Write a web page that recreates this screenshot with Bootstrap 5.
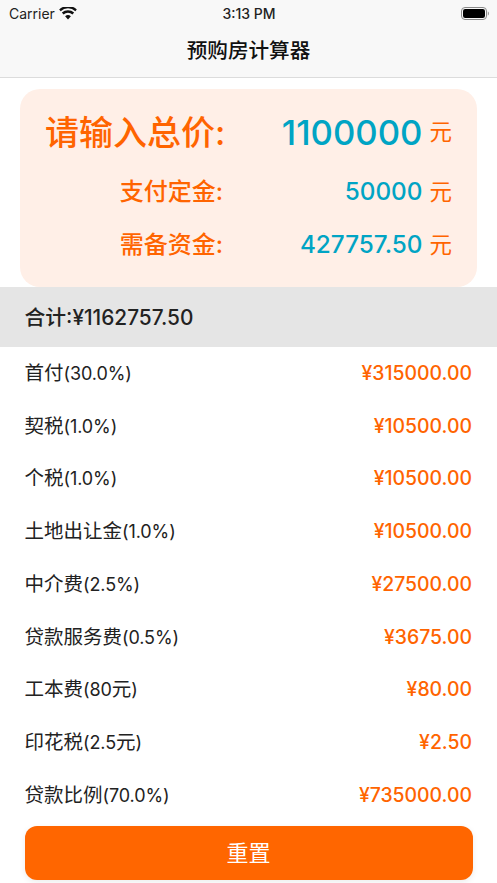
<!doctype html>
<html lang="zh">
<head>
<meta charset="utf-8">
<title>预购房计算器</title>
<link href="https://cdn.jsdelivr.net/npm/bootstrap@5.3.0/dist/css/bootstrap.min.css" rel="stylesheet">
<style>
html,body{margin:0;height:883px;overflow:hidden}
body{font-family:Inter,"Noto Sans CJK SC",sans-serif;background:#fff;color:#222}
.topbar{height:78px;background:#f8f8f8;border-bottom:1px solid #dcdcdc}
.statusrow{height:26px;padding:0 8px 0 9px;font-size:14px;color:#222}
.statusrow>div{flex:1 1 0}
.clock{font-weight:500;font-size:14px;text-align:center}
.navtitle{height:50px;font-size:20.6px;font-weight:500;color:#111}
.calcbox{margin:11px 20px 0;height:198px;background:#ffefe7;border-radius:20px;padding:10px 25px 0}
.calcrow{height:53px}
.bigrow{height:66px}
.lbl{color:#ff6400;font-size:24px;font-weight:500;text-align:right;width:178px;flex:none;white-space:nowrap}
.biglbl{font-size:34px;width:176px;margin-right:2px}
.val{color:#00a4c4;font-size:24.3px;font-weight:500;margin-left:auto}
.bigval{font-size:34.7px}
.unit{color:#ff6400;font-size:22.5px;margin-left:7px}
.totalbar{height:60px;background:#e5e5e5;padding:2px 25px 0 24.5px;font-size:20.8px;font-weight:500}
.itemrow{height:52.75px;padding:0 25px 0 24.5px;font-size:18px;letter-spacing:-.1px}
.hanzi{font-size:19.5px;letter-spacing:0}
.money{color:#ff6400;font-weight:500;font-size:19.4px;letter-spacing:0}
.resetbtn{display:block;margin:4px 25px 0 24.5px;width:448px;height:54px;background:#ff6600;border:0;border-radius:12px;color:#fff;font-size:22px;padding-top:8px;box-shadow:0 2px 6px rgba(0,0,0,.08)}
.resetbtn:hover{background:#ff6600;color:#fff}
</style>
</head>
<body>
<div class="topbar">
  <div class="statusrow d-flex align-items-center">
    <div class="d-flex align-items-center gap-1"><span>Carrier</span>
      <svg width="18" height="13" viewBox="0 0 19 14"><path d="M9.500 13.500 6.400 9.900a4.600 4.600 0 0 1 6.200 0ZM4.700 8 2.900 6a9.800 9.800 0 0 1 13.200 0l-1.800 2a7.200 7.200 0 0 0-9.600 0ZM1.600 4.500 0 2.600a14 14 0 0 1 19 0l-1.600 1.900a11.600 11.600 0 0 0-15.800 0Z" fill="#111"/></svg>
    </div>
    <div class="clock">3:13 PM</div>
    <div class="d-flex justify-content-end">
      <svg width="28" height="13" viewBox="0 0 28 13"><rect x=".5" y=".5" width="25" height="12" rx="3.500" fill="none" stroke="#888"/><rect x="2" y="2" width="22" height="9" rx="2.200" fill="#000"/><path d="M26.800 4.500c.8.300 1.200 1.100 1.200 2s-.4 1.700-1.200 2Z" fill="#999"/></svg>
    </div>
  </div>
  <div class="navtitle d-flex align-items-center justify-content-center">预购房计算器</div>
</div>
<div class="calcbox">
  <div class="calcrow bigrow d-flex align-items-center"><div class="lbl biglbl">请输入总价:</div><div class="val bigval">1100000</div><div class="unit">元</div></div>
  <div class="calcrow d-flex align-items-center"><div class="lbl">支付定金:</div><div class="val">50000</div><div class="unit">元</div></div>
  <div class="calcrow d-flex align-items-center"><div class="lbl">需备资金:</div><div class="val">427757.50</div><div class="unit">元</div></div>
</div>
<div class="totalbar d-flex align-items-center">合计:¥1162757.50</div>
<div>
  <div class="itemrow d-flex align-items-center justify-content-between"><span><span class="hanzi">首付</span>(30.0%)</span><span class="money">¥315000.00</span></div>
  <div class="itemrow d-flex align-items-center justify-content-between"><span><span class="hanzi">契税</span>(1.0%)</span><span class="money">¥10500.00</span></div>
  <div class="itemrow d-flex align-items-center justify-content-between"><span><span class="hanzi">个税</span>(1.0%)</span><span class="money">¥10500.00</span></div>
  <div class="itemrow d-flex align-items-center justify-content-between"><span><span class="hanzi">土地出让金</span>(1.0%)</span><span class="money">¥10500.00</span></div>
  <div class="itemrow d-flex align-items-center justify-content-between"><span><span class="hanzi">中介费</span>(2.5%)</span><span class="money">¥27500.00</span></div>
  <div class="itemrow d-flex align-items-center justify-content-between"><span><span class="hanzi">贷款服务费</span>(0.5%)</span><span class="money">¥3675.00</span></div>
  <div class="itemrow d-flex align-items-center justify-content-between"><span><span class="hanzi">工本费</span>(80<span class="hanzi">元</span>)</span><span class="money">¥80.00</span></div>
  <div class="itemrow d-flex align-items-center justify-content-between"><span><span class="hanzi">印花税</span>(2.5<span class="hanzi">元</span>)</span><span class="money">¥2.50</span></div>
  <div class="itemrow d-flex align-items-center justify-content-between"><span><span class="hanzi">贷款比例</span>(70.0%)</span><span class="money">¥735000.00</span></div>
</div>
<button type="button" class="btn resetbtn">重置</button>
<script src="https://cdn.jsdelivr.net/npm/bootstrap@5.3.0/dist/js/bootstrap.bundle.min.js"></script>
</body>
</html>
